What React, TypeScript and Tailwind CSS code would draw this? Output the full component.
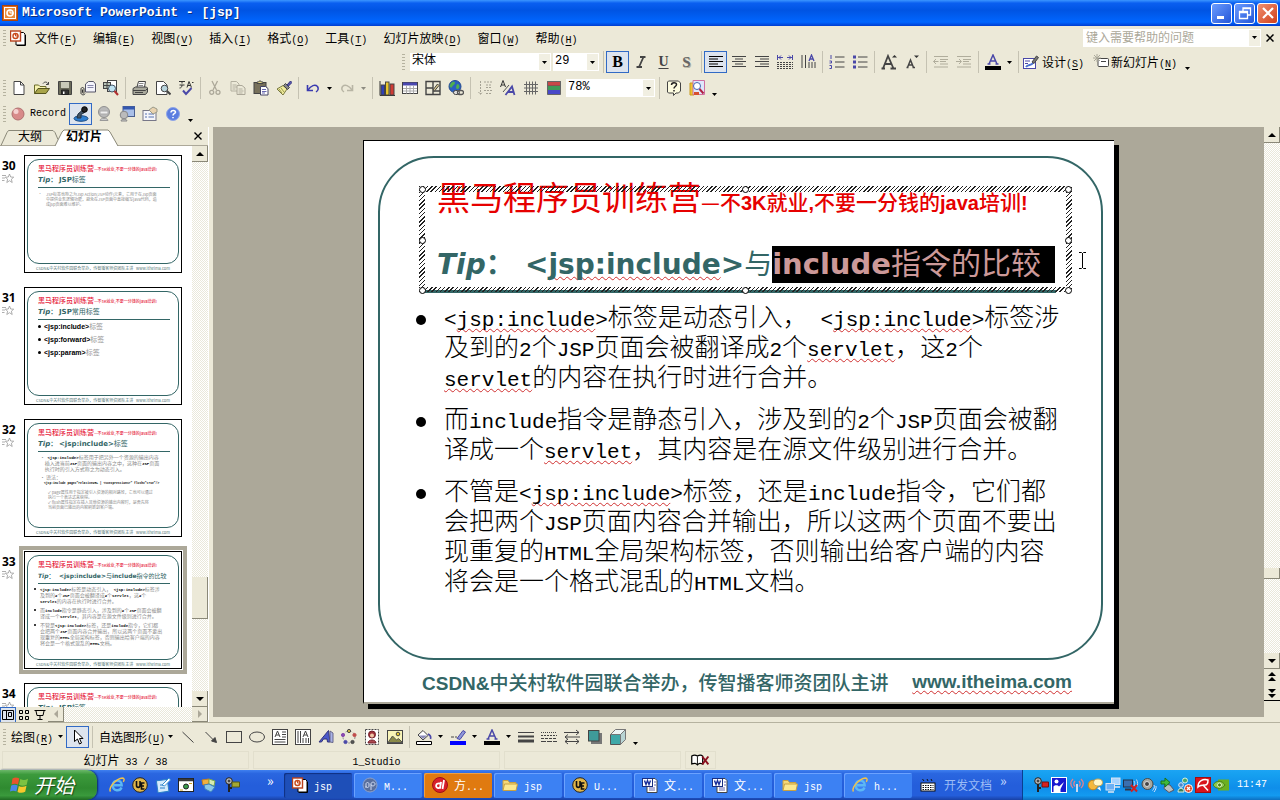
import React from "react";

type Kids = { children?: React.ReactNode };

/* ---------- text helpers ---------- */

function Mixed({ text, latin }: { text: string; latin: string }) {
  return (
    <span>
      {text.split(/([\x20-\x7e]+)/).map((run, i) =>
        i % 2 === 1 ? (
          <span key={i} className={latin}>
            {run}
          </span>
        ) : (
          run
        )
      )}
    </span>
  );
}

const UI_LATIN = "font-['Liberation_Mono',monospace] text-[10px] leading-none";

function Ui({ text }: { text: string }) {
  return <Mixed text={text} latin={UI_LATIN} />;
}

function Accel({ label, k }: { label: string; k: string }) {
  return (
    <span className="whitespace-nowrap">
      {label}
      <span className={UI_LATIN}>
        (<span className="underline underline-offset-2">{k}</span>)
      </span>
    </span>
  );
}

/* ---------- icons ---------- */

function Ico({ children, c = "size-4" }: Kids & { c?: string }) {
  return (
    <svg viewBox="0 0 16 16" className={`${c} shrink-0`} fill="none" stroke="#444" aria-hidden="true">
      {children}
    </svg>
  );
}

const Caret = () => (
  <svg viewBox="0 0 5 3" className="h-[3px] w-[5px] shrink-0" aria-hidden="true">
    <path d="M0 0h5L2.5 3z" fill="#000" />
  </svg>
);

const icons = {
  ppt: (
    <Ico>
      <rect x="0.5" y="0.5" width="15" height="15" fill="#d9661c" stroke="#a8440c" />
      <rect x="2.5" y="2.5" width="11" height="11" fill="#e98b3a" stroke="#fff" />
      <circle cx="8" cy="8" r="3" stroke="#fff" strokeWidth="1.6" />
      <path d="M8 8V4.500M8 8h4" stroke="#fff" />
    </Ico>
  ),
  pptDoc: (
    <Ico>
      <path d="M6 2.500h7.500L15 4v11H6z" fill="#fff" stroke="#000" />
      <path d="M15.500 5v10.500H7" stroke="#000" />
      <rect x="0.500" y="1" width="10" height="10" fill="#fff" stroke="#b8401c" strokeWidth="1.400" />
      <circle cx="5.500" cy="6" r="2.500" stroke="#c84a1c" strokeWidth="1.400" />
      <path d="M5.500 6V3.500M5.500 6h3" stroke="#c84a1c" />
    </Ico>
  ),
  newDoc: (
    <Ico>
      <path d="M3 1.500h6.500L13 5v9.500H3z" fill="#fff" />
      <path d="M9.500 1.500V5H13" />
    </Ico>
  ),
  open: (
    <Ico>
      <path d="M.5 13.500V5h4l1.500 1.500h6V9" fill="#f7f3b0" stroke="#6b6b2a" />
      <path d="M.5 13.500L4 8.500h11.500l-3.500 5z" fill="#a8a44a" stroke="#555520" />
      <path d="M9 3.500c1.500-2 4-2 5 .5M14.500 2v2.500H12" />
    </Ico>
  ),
  save: (
    <Ico>
      <path d="M1.500 1.500h13v13h-13z" fill="#6b6b5a" />
      <path d="M4 2h8v6H4z" fill="#c9c9b8" stroke="none" />
      <path d="M4.500 10h7v4.500h-7z" fill="#333" stroke="#222" />
      <path d="M6 11.500h1.500v2.500H6z" fill="#fff" stroke="none" />
    </Ico>
  ),
  mail: (
    <Ico>
      <path d="M5.500 4l3-2.500h5l2 2.500v8h-10z" fill="#f4f4fb" stroke="#556" />
      <path d="M7.500 5.500h6M7.500 7.500h6" stroke="#88a" />
      <path d="M1 13.500V9c0-2 3-2 3 0v3.500c0 1-1.500 1-1.500 0V9.500M1 13.500c1 2 4 1.500 4 0" stroke="#333" />
    </Ico>
  ),
  searchDoc: (
    <Ico>
      <rect x="4.500" y="0.500" width="9" height="11" fill="#fff" />
      <rect x="0.500" y="2.500" width="7" height="6" fill="#b8c4b8" />
      <path d="M1 5.500h6M4 3v5" />
      <circle cx="9" cy="8.500" r="3.500" fill="#bfe3f2" stroke="#456" />
      <path d="M11.500 11l3.500 4" stroke="#b03030" strokeWidth="2" />
    </Ico>
  ),
  print: (
    <Ico>
      <path d="M5 7l1.500-5.500h7L12.500 7" fill="#fff" />
      <path d="M7 3.500h4.500M6.500 5.500H11" stroke="#888" />
      <path d="M1 8.500L3.500 7h11L15.500 8v4l-2 2.500H1z" fill="#a9a99c" />
      <path d="M1 10.500h12.500l2-2M3 12.500h8" />
    </Ico>
  ),
  preview: (
    <Ico>
      <path d="M1.500 1.500h7L12 5v9.500H1.500z" fill="#fff" />
      <circle cx="9.500" cy="8.500" r="3.300" fill="#b9d4dc" />
      <path d="M12 11l3.500 3.500" strokeWidth="2" />
    </Ico>
  ),
  spell: (
    <Ico>
      <path d="M1 1.500h6M4 1.500v2M1.500 5h5M4 5c0 2-1 3-2.500 3M9 7.500l2-6 2.500 6M9.700 5.500h3M14 2.500h1.500" stroke="#333" />
      <path d="M5 10.500l3 3.500 5.500-6" stroke="#4a48a8" strokeWidth="2" />
    </Ico>
  ),
  cut: (
    <Ico>
      <path d="M5 1l4.500 9M10.500 1L6 10" stroke="#aca899" strokeWidth="1.300" />
      <circle cx="4.700" cy="12.300" r="2" stroke="#aca899" strokeWidth="1.300" />
      <circle cx="11" cy="12.300" r="2" stroke="#aca899" strokeWidth="1.300" />
    </Ico>
  ),
  copy: (
    <Ico>
      <path d="M1 1.500h5.500L9 4v7H1zM2.500 5h4M2.500 7h5M2.500 9h3" stroke="#b3b0a0" />
      <path d="M7 5.500h5L15 8v6.500H7z" fill="#ece9d8" stroke="#aca899" />
      <path d="M8.500 9h4M8.500 11h5M8.500 13h4" stroke="#b3b0a0" />
    </Ico>
  ),
  paste: (
    <Ico>
      <rect x="1" y="2.500" width="12" height="11" fill="#77705a" stroke="#444" />
      <path d="M4 3.500V2h1.500C6 .5 8 .5 8.500 2H10v1.500z" fill="#e6d98a" />
      <path d="M7.500 6.500h5l2.500 2v6.500H7.500z" fill="#fff" stroke="#446" />
      <path d="M9 9.500h4M9 11.500h4.500M9 13h3" stroke="#6a6ab0" />
    </Ico>
  ),
  brush: (
    <Ico>
      <path d="M1 9l6-3.500 4 3.500-4 6z" fill="#f1ec9c" stroke="#777740" />
      <path d="M3 9l3 4M5 8l3 4" stroke="#9a9a50" />
      <path d="M7.500 5.500l4 4 2-2-4-4z" fill="#888" />
      <path d="M11 5l3.500-4L16 2.500 12.500 6z" fill="#5a58b0" stroke="#33337a" />
    </Ico>
  ),
  undo: (
    <Ico>
      <path d="M2.500 5v5.500H8" stroke="#3a3ab0" strokeWidth="1.600" />
      <path d="M3 10C6 5.500 10 4 12.500 6.500c1.500 2.500 0 4.500-1.500 5.500" stroke="#3a3ab0" strokeWidth="1.500" />
    </Ico>
  ),
  redo: (
    <Ico>
      <path d="M13.500 5v5.500H8" stroke="#b8b5a5" strokeWidth="1.600" />
      <path d="M13 10C10 5.500 6 4 3.500 6.500c-1.500 2.500 0 4.500 1.500 5.500" stroke="#b8b5a5" strokeWidth="1.500" />
    </Ico>
  ),
  chart: (
    <Ico>
      <path d="M1 1v14.500h15" stroke="#333" />
      <rect x="2" y="5" width="3.500" height="10" fill="#2f3fb8" />
      <rect x="6.500" y="2" width="3.500" height="13" fill="#e8c52c" />
      <rect x="11" y="4" width="4" height="11" fill="#cf3b34" />
    </Ico>
  ),
  table: (
    <Ico>
      <rect x="0.500" y="2.500" width="15" height="11" fill="#fff" />
      <path d="M1 4h14" stroke="#4a48b0" strokeWidth="3" />
      <path d="M1 8.500h14M1 11h14M4.500 5.500v8M8 5.500v8M11.500 5.500v8" stroke="#aaa" />
    </Ico>
  ),
  borders: (
    <Ico>
      <path d="M1 1.500h14v13H1zM1 8h7M8 1.500v13M8 11h7" strokeWidth="1.400" />
      <path d="M8 10l4.500-6 1.500 1.500L9.500 11z" fill="#d8c890" />
    </Ico>
  ),
  link: (
    <Ico>
      <circle cx="7" cy="6.500" r="6" fill="#2a5fc0" stroke="#234a90" />
      <path d="M3 3c2-2 4-1.500 4 0s-2 2-3 4S1.500 6 1.500 6zM9 4c2 0 3 2 2 4S8 9 8 7z" fill="#4fae50" stroke="none" />
      <rect x="5.500" y="10.500" width="6" height="4" rx="2" fill="#ddd" />
      <rect x="9.500" y="10.500" width="6" height="4" rx="2" fill="none" stroke="#555" strokeWidth="1.300" />
    </Ico>
  ),
  expand: (
    <Ico>
      <path d="M3.500 1v13M1.500 12l2 2.500 2-2.500M7 2h9M9 5h6M9 7.500h5M7 10.500h9M9 13.500h6" stroke="#a5a294" strokeDasharray="2 1" />
    </Ico>
  ),
  fmt: (
    <Ico>
      <path d="M0.500 7L3 .5 5.500 7M1.300 5h3.400" stroke="#333" />
      <path d="M3 12L9 5" stroke="#555" />
      <path d="M5.500 15L12 6.500 14.500 15M8 12h6" stroke="#4a48a8" strokeWidth="1.800" />
    </Ico>
  ),
  grid: (
    <Ico>
      <path d="M1 4.500h14M1 8h14M1 11.500h14M3.500 1.500v13M6.500 1.500v13M9.500 1.500v13M12.500 1.500v13" stroke="#666" />
    </Ico>
  ),
  colors: (
    <Ico>
      <path d="M1.500 1.500h13v4.500h-13z" fill="#c84848" stroke="#555" />
      <path d="M1.500 6h13v4h-13z" fill="#3f9a58" stroke="none" />
      <path d="M1.500 10h13v4.500h-13z" fill="#4848c8" stroke="none" />
      <path d="M1.500 1.500h13v13h-13z" stroke="#666" />
    </Ico>
  ),
  help: (
    <Ico>
      <path d="M2.500 1h10l2 2v8l-2 2H10l-2.500 2.500V13h-5L1.500 12V2z" fill="#fdfce0" />
      <path d="M5.500 5c0-3 5-3 5-.5C10.500 6.500 8 6.500 8 8.500M8 10v1.500" stroke="#222" strokeWidth="1.500" />
    </Ico>
  ),
  research: (
    <Ico>
      <path d="M1 3h4v12H1z" fill="#f0c530" stroke="#c89a20" />
      <path d="M4 .5h11.500v14H4z" fill="#dfe7fb" stroke="#d070a0" />
      <circle cx="8" cy="6" r="3.500" fill="#fff" stroke="#4466b0" />
      <path d="M10.500 9l4 4.500" stroke="#b02040" strokeWidth="2" />
      <path d="M5 12h5v3H5z" fill="#d85030" stroke="none" />
    </Ico>
  ),
  italic: (
    <Ico>
      <path d="M7 3h5.500M3.500 13H9M10.500 3L6 13" strokeWidth="1.800" />
    </Ico>
  ),
  left: (
    <Ico>
      <path d="M1 2.500h14M1 5h9M1 7.500h14M1 10h9M1 12.500h14" stroke="#000" />
    </Ico>
  ),
  center: (
    <Ico>
      <path d="M1 2.500h14M4 5h8M1 7.500h14M4 10h8M1 12.500h14" />
    </Ico>
  ),
  right: (
    <Ico>
      <path d="M1 2.500h14M6 5h9M1 7.500h14M6 10h9M1 12.500h14" />
    </Ico>
  ),
  distribute: (
    <Ico>
      <path d="M.5 1v5M15.500 1v5M1 3.500h5M10 3.500h5M4 1.500l-2 2 2 2M12 1.500l2 2-2 2" stroke="#4a48a8" />
      <path d="M0 8.500h16M0 10.500h16M0 12.500h16M0 14.500h16" strokeDasharray="2 1" />
    </Ico>
  ),
  vertical: (
    <Ico>
      <path d="M2 1v13M5.500 1v13M9 8v6M12 8v6M15 8v6" />
      <path d="M9 7l2.500-6L14 7M10 5h3.500" stroke="#4a48a8" strokeWidth="1.300" />
    </Ico>
  ),
  numbered: (
    <Ico>
      <path d="M6 3h9.500M6 8h9.500M6 13h9.500" />
      <path d="M2 1v4M.5 7h2v2h-2M.5 11.500h2v3h-2" stroke="#4a48a8" />
    </Ico>
  ),
  bullets: (
    <Ico>
      <path d="M6 3h9.500M6 8h9.500M6 13h9.500" />
      <path d="M1 1.500h3v3H1zM1 6.500h3v3H1zM1 11.500h3v3H1z" fill="#4a48a8" stroke="none" />
    </Ico>
  ),
  grow: (
    <Ico>
      <path d="M2 14.500L7 2l5.500 12.500M4 10h6.500M.5 14.500H4M9.500 14.500H15" stroke="#444" strokeWidth="1.800" />
      <path d="M11 3.500h5L13.500 1z" fill="#333" stroke="none" />
    </Ico>
  ),
  shrink: (
    <Ico>
      <path d="M3.500 13.500L6.500 6l3 7.500M4.500 11h4M2.500 13.500h2M8.500 13.500h2.500" strokeWidth="1.500" />
      <path d="M10 1.500h5L12.500 4z" fill="#333" stroke="none" />
    </Ico>
  ),
  outdent: (
    <Ico>
      <path d="M1 2.500h14M7 5.500h8M7 7.500h6M7 10h8M1 13h14M5.500 7.500h-5M3 5L.5 7.500 3 10" stroke="#b0ad9c" />
    </Ico>
  ),
  indent: (
    <Ico>
      <path d="M1 2.500h14M7 5.500h8M7 7.500h6M7 10h8M1 13h14M0 7.500h5M3 5l2.500 2.500L3 10" stroke="#b0ad9c" />
    </Ico>
  ),
  fontColor: (
    <Ico>
      <path d="M4 10L8 1l4 9M5.300 7h5M2.500 10h3M10.500 10h3" stroke="#4a48a8" strokeWidth="1.500" />
      <path d="M0 12h16v4H0z" fill="#000" stroke="none" />
    </Ico>
  ),
  design: (
    <Ico>
      <rect x="0.500" y="4.500" width="12" height="10" fill="#fff" stroke="#4a48a8" />
      <path d="M2 7h5M2 9.500h3" stroke="#4a48a8" />
      <path d="M3 13c2-3 5-1 7-4" stroke="#4a6fd0" strokeWidth="2" />
      <path d="M9 8l4.500-6 2 1.500-4.500 6z" fill="#777" />
    </Ico>
  ),
  newSlide: (
    <Ico>
      <rect x="5" y="4.500" width="10.500" height="8" rx="1" fill="#fff" />
      <path d="M8 7.500h5" />
      <path d="M4 0v8M0 4h8M1 1l6 6M7 1L1 7" stroke="#aaa89a" />
    </Ico>
  ),
  record: (
    <Ico>
      <circle cx="8" cy="8" r="6" fill="#d88a8a" stroke="#b07070" />
      <circle cx="6" cy="5.500" r="2.500" fill="#f5d0d0" stroke="none" />
    </Ico>
  ),
  pointer3d: (
    <Ico>
      <ellipse cx="8" cy="12.500" rx="7" ry="2.800" fill="#2f7fd0" stroke="#1a4a80" />
      <path d="M4 12l1-4 4-3.500 2.500 2-3.500 2V12z" fill="#456" stroke="#234" />
      <circle cx="11.500" cy="3.500" r="2.800" fill="#222" stroke="#000" />
    </Ico>
  ),
  webcam: (
    <Ico>
      <circle cx="8" cy="6" r="5.500" fill="#b9b9b9" stroke="#8f8f8f" />
      <path d="M4 5h8v3H4z" fill="#eee" stroke="#aaa" />
      <path d="M4 14.500c0-3 8-3 8 0z" fill="#ccc" stroke="#999" />
    </Ico>
  ),
  camWin: (
    <Ico>
      <rect x="4" y="0.500" width="11.500" height="10" fill="#a9bfe8" stroke="#4a5f90" />
      <path d="M4 2h11.500" stroke="#3458b0" strokeWidth="3" />
      <circle cx="5" cy="9" r="3.800" fill="#bbb" stroke="#888" />
      <path d="M2 15c0-2.500 6-2.500 6 0z" fill="#ccc" stroke="#888" />
    </Ico>
  ),
  props: (
    <Ico>
      <rect x="1" y="4.500" width="13" height="10" fill="#f5f5fa" stroke="#778" />
      <path d="M3 8h2M3 11h2M6.500 8H12M6.500 11H12" stroke="#5570b0" />
      <path d="M7 4l4-3 4 2v3l-4 2z" fill="#e9d3b0" stroke="#998" />
    </Ico>
  ),
  helpBlue: (
    <Ico>
      <circle cx="8" cy="8" r="6.500" fill="#5b7de0" stroke="#8fa5e8" />
      <path d="M6 6.500c0-3 4.500-2.500 4.500-.3C10.500 7.500 8 7.500 8 9.500M8 11v1.300" stroke="#fff" strokeWidth="1.500" />
    </Ico>
  ),
  cursor: (
    <Ico>
      <path d="M4.500 1v11.500l3-2.500 2 5 2-1-2-4.500h3.500z" fill="#fff" stroke="#000" />
    </Ico>
  ),
  line: (
    <Ico>
      <path d="M2.500 3l11 10.500" />
    </Ico>
  ),
  arrow: (
    <Ico>
      <path d="M2.500 3l8 8" />
      <path d="M13.500 13.500L8.500 12l3.500-3.500z" fill="#444" />
    </Ico>
  ),
  rect: (
    <Ico>
      <rect x="0.500" y="2.500" width="15" height="11" />
    </Ico>
  ),
  oval: (
    <Ico>
      <ellipse cx="8" cy="8" rx="7.500" ry="5" />
    </Ico>
  ),
  textbox: (
    <Ico>
      <rect x="0.500" y="0.500" width="15" height="15" fill="#fff" />
      <path d="M3 8l2.500-6L8 8M4 6h3M10 3h4M10 5.500h4M10 8h4M2.500 10.500h11M2.500 13h11" />
    </Ico>
  ),
  vtextbox: (
    <Ico>
      <rect x="0.500" y="0.500" width="15" height="15" fill="#fff" />
      <path d="M3 2v12M5.500 2v12M8 9v5M11 9v5M13.500 9v5M8 8l2.500-6L13 8M9 6h3" />
    </Ico>
  ),
  wordart: (
    <Ico>
      <path d="M1 13L10.500 1.500 12 13H9.500L9 10H5.500L3.500 13z" fill="#4a58c8" stroke="#33337a" />
      <path d="M12 2l3 2v9.500l-3-.5z" fill="#a9b2e8" stroke="#668" />
    </Ico>
  ),
  diagram: (
    <Ico>
      <circle cx="8" cy="8" r="6" stroke="#888" strokeDasharray="2 2" />
      <circle cx="8" cy="2" r="1.600" fill="#d8c040" />
      <circle cx="13.500" cy="6" r="1.600" fill="#c04a4a" stroke="#c04a4a" />
      <circle cx="11.500" cy="13" r="1.600" fill="#555" />
      <circle cx="4.500" cy="13" r="1.600" fill="#4a48a8" stroke="#4a48a8" />
      <circle cx="2" cy="6" r="1.600" fill="#8a4ab0" stroke="#8a4ab0" />
    </Ico>
  ),
  clipart: (
    <Ico>
      <rect x="1.500" y="0.500" width="13" height="15" fill="#fff" strokeDasharray="2 1" />
      <circle cx="8" cy="5.500" r="3.500" fill="#a03038" stroke="#702028" />
      <circle cx="8" cy="6.500" r="2" fill="#f0c8a8" stroke="none" />
      <path d="M4 14c0-4 8-4 8 0z" fill="#b04a50" stroke="#702028" />
    </Ico>
  ),
  picture: (
    <Ico>
      <rect x="0.500" y="1.500" width="15" height="13" fill="#f8f4b8" />
      <circle cx="11" cy="5" r="1.800" fill="#e8c830" />
      <path d="M1 13.500L5.500 7l4 4 2-1.500 4 4z" fill="#8a8a48" stroke="#555" />
    </Ico>
  ),
  fill: (
    <Ico>
      <path d="M2 6l5-4.500 5 5L7 11z" fill="#fff" />
      <path d="M3 6.500h8L7 10z" fill="#8a8ab8" stroke="none" />
      <path d="M12 5c2.500 1 3 3 2.500 5" stroke="#4a48a8" strokeWidth="1.600" />
      <path d="M.5 12.500h15v3H.5z" fill="#fff" stroke="#000" />
    </Ico>
  ),
  lineColor: (
    <Ico>
      <path d="M1 8h3M5 8h2" />
      <path d="M7 9.500l6-8 2.500 1.500-5.500 7.500z" fill="#8f98d8" stroke="#4a48a8" />
      <path d="M0 12h16v4H0z" fill="#00f" stroke="none" />
    </Ico>
  ),
  lineStyle: (
    <Ico>
      <path d="M0 3.500h16" />
      <path d="M0 7.500h16" strokeWidth="2" />
      <path d="M0 12h16" strokeWidth="3" />
    </Ico>
  ),
  dashStyle: (
    <Ico>
      <path d="M0 3.500h16" strokeDasharray="1 1" />
      <path d="M0 6.500h16" strokeDasharray="2 1" />
      <path d="M0 9.500h16" strokeDasharray="3 1" />
      <path d="M0 12.500h16" strokeDasharray="5 1" />
    </Ico>
  ),
  arrowStyle: (
    <Ico>
      <path d="M0 3.500h15M12 1l3 2.500L12 6M1 8h15M4 5.500L1 8l3 2.500M1 12.500h14M4 10l-3 2.500L4 15M12 10l3 2.500-3 2.500" />
    </Ico>
  ),
  shadow: (
    <Ico>
      <path d="M4 4h11v11H4z" fill="#777" stroke="none" />
      <rect x="1.500" y="1.500" width="10.500" height="10.500" fill="#3f9a9a" />
    </Ico>
  ),
  cube: (
    <Ico>
      <path d="M.5 5.500h10v10H.5z" fill="#3fa8a8" stroke="#555" />
      <path d="M.5 5.500l5-5h10l-5 5z" fill="#eef6f6" stroke="#777" />
      <path d="M10.500 5.500l5-5v10l-5 5z" fill="#b8d4d4" stroke="#777" />
    </Ico>
  ),
  book: (
    <Ico c="h-[14px] w-[21px]">
      <path d="M-2 3.500c3-2 5-1 6.500 0 1.500-1 4-2 6 0v9c-2-1-4.500-1-6 1-1.500-2-4-2-6.500-1z" fill="#fff" stroke="#000" strokeWidth="1.400" />
      <path d="M4.500 4v9" stroke="#000" />
      <path d="M10 4l7 9M17 4l-7 9" stroke="#8b1020" strokeWidth="2.200" />
    </Ico>
  ),
  ie: (
    <Ico>
      <path d="M12.500 10.500c-1.500 4-8.500 4-8.800-2 0-6.500 9-6.500 9-.3H5" stroke="#5cb8f5" strokeWidth="2.400" />
      <path d="M1.500 14.500C-1 11 7 1.500 13.500 1c2 0 2 2 .8 3.800" stroke="#f2c24a" strokeWidth="1.400" />
    </Ico>
  ),
  ue: (
    <Ico>
      <circle cx="8" cy="8" r="7.300" fill="#e0b64a" stroke="#222" />
      <path d="M4.500 4v4.500c0 2.500 3.500 2.500 3.500 0V4M12.500 6H9.500v6h3M9.500 9h2.500" stroke="#111" strokeWidth="1.600" />
    </Ico>
  ),
  outlook: (
    <Ico>
      <rect x="2" y="3" width="11" height="12" fill="#d4ebfb" stroke="#2b7fc8" transform="rotate(-8 8 8)" />
      <path d="M5 8h5M5 11h5" stroke="#2b7fc8" />
      <path d="M7 8l7-7 1.500 2-6 6z" fill="#fff" stroke="#3a8fd0" />
    </Ico>
  ),
  desk: (
    <Ico>
      <rect x="0.500" y="1.500" width="15" height="13" fill="#fff" stroke="#222" />
      <path d="M1 3h14" stroke="#3a3a3a" strokeWidth="2.500" />
      <circle cx="8" cy="9.500" r="2.500" fill="#3a9a4a" stroke="#222" />
      <path d="M2 13h3M11 6.500h3" stroke="#c8a020" />
    </Ico>
  ),
  butterfly: (
    <Ico>
      <path d="M1 3l7-1v5l-6 1z" fill="#f0b040" stroke="#c88020" />
      <path d="M8 2l6 2-1 5-5-2z" fill="#d8ecb0" stroke="#7aa850" />
      <path d="M3 8l5-1 6 3-4 5-6-3z" fill="#8ac8e8" stroke="#3a80c0" />
    </Ico>
  ),
  keyman: (
    <Ico>
      <circle cx="5" cy="4" r="3.300" fill="#bbb" stroke="#222" />
      <circle cx="5" cy="4" r="1" fill="#222" />
      <path d="M5 7v8M5 11h3" stroke="#222" strokeWidth="2" />
      <path d="M8 5h7.500v5H8z" fill="#a5a832" stroke="#55581a" />
    </Ico>
  ),
  keyred: (
    <Ico>
      <circle cx="5" cy="4" r="3.300" fill="#bbb" stroke="#222" />
      <circle cx="5" cy="4" r="1" fill="#222" />
      <path d="M5 7v8M5 11h3" stroke="#222" strokeWidth="2" />
      <path d="M9 5h6.500v5H9z" fill="#d82020" stroke="#701010" />
    </Ico>
  ),
  mp: (
    <Ico>
      <circle cx="8" cy="8" r="7" fill="#5a6f9c" stroke="#8ba0cc" />
      <path d="M4 11V7c0-2 3-2 3 0v2c0 2-3 2-3 0M9 13V7c0-2.500 4-2.500 4 0s-4 2.500-4 .5" stroke="#d0dcf4" />
    </Ico>
  ),
  red: (
    <Ico>
      <circle cx="8" cy="8" r="7.500" fill="#d8202a" stroke="#a01018" />
      <path d="M8 6.500c-5-1-5 5-1 4.500 1.500 0 2-6 2-6L8 11.500M12 3l-1.500 9" stroke="#fff" strokeWidth="1.800" />
    </Ico>
  ),
  folder: (
    <Ico>
      <path d="M1 13V3.500h5l1.500 2H14V8" fill="#f4d878" stroke="#c8a040" />
      <path d="M1 13.500L2.500 7h13L14 13.500z" fill="#fbe88f" stroke="#c8a040" />
    </Ico>
  ),
  word: (
    <Ico>
      <path d="M5 1.500h8l2 2v12H5z" fill="#fff" stroke="#444" />
      <path d="M7 11h6M7 13h6M12 5h2M12 8h2" stroke="#66a" />
      <rect x="0.500" y="1.500" width="10" height="8" fill="#fff" stroke="#1a2f80" />
      <path d="M2.500 3.500l1.500 4 1.500-4 1.500 4 1.500-4" stroke="#1a2f9a" strokeWidth="1.400" />
    </Ico>
  ),
  keyboard: (
    <Ico>
      <path d="M4 4l-1.500-2M8 4L7 2M12 4l-1-2" stroke="#111" />
      <rect x="1" y="6" width="14" height="8" fill="#fff" stroke="#111" />
      <path d="M2.500 8.500h11M2.500 10.500h11M2.500 12.500h11" stroke="#111" strokeDasharray="1.500 1" />
    </Ico>
  ),
  trayMan: (
    <Ico>
      <rect x="0.500" y="0.500" width="15" height="15" fill="#1818d0" stroke="#fff" />
      <circle cx="5.500" cy="4.500" r="2" fill="#fff" stroke="none" />
      <path d="M2.500 15V9.500C4 7.500 7 8 8 9.500l5-4.500-3.500 7V15z" fill="#fff" stroke="none" />
    </Ico>
  ),
  antenna: (
    <Ico>
      <path d="M4 2c-3 3-3 6 0 9M6 4C4.500 6 4.500 8 6 9.500M12 2c3 3 3 6 0 9M10 4c1.500 2 1.500 4 0 5.500" stroke="#e08090" strokeWidth="1.300" />
      <path d="M8 7v8" stroke="#c8d8f0" strokeWidth="2" />
    </Ico>
  ),
  chat: (
    <Ico>
      <circle cx="6" cy="8" r="4.800" fill="#f5b83a" stroke="#c88418" />
      <ellipse cx="11" cy="5.500" rx="4.500" ry="3.500" fill="#fff7c8" stroke="#c8a858" />
      <path d="M10 11l4 3-1-4z" fill="#fff" stroke="none" />
    </Ico>
  ),
  net: (
    <Ico>
      <rect x="6.500" y="1" width="8.500" height="6.500" fill="#a8d4ff" stroke="#d8e4f4" />
      <rect x="1" y="6.500" width="8.500" height="6.500" fill="#6cb0f5" stroke="#d8e4f4" />
      <path d="M3 15h6M10 10h5" stroke="#e0e8f4" strokeWidth="1.600" />
    </Ico>
  ),
  wifiOff: (
    <Ico>
      <rect x="0.500" y="3" width="9" height="7" fill="#3a6fb0" stroke="#23324a" />
      <path d="M2 12.500h6" stroke="#334" strokeWidth="2" />
      <path d="M11 4c1 2 1 3 0 5M13.500 2.500c1.500 3 1.500 5 0 7.500" stroke="#c8d4e8" />
      <path d="M8 8l6 6.500M14 8l-6 6.500" stroke="#d02020" strokeWidth="2" />
    </Ico>
  ),
  speaker: (
    <Ico>
      <circle cx="6.500" cy="7" r="5.500" fill="#a8a8a0" stroke="#4a4a48" />
      <circle cx="6" cy="7" r="2.500" fill="#444" stroke="#ddd" />
      <path d="M13 8c1 2 0 4-1.500 5.500M15 9c.5 2-.5 4-2 6" stroke="#d0e4ff" />
    </Ico>
  ),
  usb: (
    <Ico>
      <path d="M6 7l5 1 4 5-5 2.500-5-4z" fill="#b8c0c0" stroke="#556" />
      <path d="M2 7V4h4V1l5 4.500L6 10V7z" fill="#3fb83a" stroke="#1a701a" />
    </Ico>
  ),
  users: (
    <Ico>
      <circle cx="8" cy="3.500" r="2.500" fill="#48a868" stroke="#d8f0e0" />
      <circle cx="4" cy="8" r="2.300" fill="#4a88c8" stroke="#d8e8f8" />
      <path d="M1 15c0-5 6-5 6 0z" fill="#3a7f5a" stroke="#d8f0e0" />
      <circle cx="11.500" cy="11.500" r="4" fill="#e04a28" stroke="#fff" />
      <path d="M10 10l3 3M13 10l-3 3" stroke="#fff" strokeWidth="1.300" />
    </Ico>
  ),
  umbrella: (
    <Ico>
      <rect x="0.500" y="0.500" width="15" height="15" fill="#d8141c" stroke="#a00c10" />
      <path d="M3 10C3 4 8 1.500 13 3c0 4-1 5-3 5s-5 0-7 2z" fill="none" stroke="#fff" strokeWidth="1.500" />
      <path d="M8 8l5 5.500" stroke="#fff" strokeWidth="1.500" />
    </Ico>
  ),
  nvidia: (
    <Ico>
      <rect x="5" y="2.500" width="11" height="11" fill="#6cb020" stroke="none" />
      <path d="M0 8c3-5 9-5 12 0-3 4.500-9 4.500-12 0z" fill="#8cc850" stroke="#4a8010" />
      <circle cx="6.500" cy="8" r="2" fill="#4a8010" stroke="#dff0c0" />
    </Ico>
  ),
};

type IconName = keyof typeof icons;

/* ---------- toolbar pieces ---------- */

function Btn({ icon, on, children }: Kids & { icon?: IconName; on?: boolean }) {
  return (
    <button
      type="button"
      className={
        on
          ? "flex h-[22px] w-[23px] shrink-0 items-center justify-center border border-[#316ac5] bg-[#dde4ee]"
          : "flex h-[22px] w-[23px] shrink-0 items-center justify-center"
      }
    >
      {icon ? icons[icon] : children}
    </button>
  );
}

const Drop = () => (
  <button type="button" className="flex h-[22px] w-[11px] shrink-0 items-center justify-center">
    <Caret />
  </button>
);

const Sep = () => <span className="ml-[3px] mr-[2px] h-[22px] w-px shrink-0 bg-[#c5c2b2]" />;

const Grip = () => (
  <span className="ml-[3px] mr-1 h-4 w-[3px] shrink-0 bg-[repeating-linear-gradient(#b5b29f_0_1px,#ece9d8_1px_3px)]" />
);

const More = () => (
  <button type="button" className="flex h-[22px] w-3 shrink-0 items-end justify-center pb-[3px]">
    <Caret />
  </button>
);

function Combo({ value, w, label }: { value: string; w: string; label: string }) {
  return (
    <label className={`relative mx-px flex h-[18px] shrink-0 items-center bg-white ${w}`}>
      <select
        aria-label={label}
        defaultValue={value}
        className="size-full appearance-none bg-white pl-[2px] pb-[2px] font-['Liberation_Mono','Noto_Sans_CJK_SC',monospace] text-[12px] leading-4 outline-none"
      >
        <option>{value}</option>
      </select>
      <span className="pointer-events-none absolute right-px flex h-4 w-[11px] items-center justify-center bg-[#f1efe2]">
        <Caret />
      </span>
    </label>
  );
}

/* ---------- slide pieces ---------- */

const Spell = ({ children }: Kids) => (
  <span className="underline decoration-[#d03030] decoration-wavy decoration-1 underline-offset-2 [text-decoration-skip-ink:none]">
    {children}
  </span>
);

const MONO = "font-['Liberation_Mono',monospace] text-[21px] leading-4";

const bodyParagraphs: string[][] = [
  ["<[jsp:include]>标签是动态引入， <[jsp:include]>标签涉", "及到的2个JSP页面会被翻译成2个[servlet]，这2个", "[servlet]的内容在执行时进行合并。"],
  ["而include指令是静态引入，涉及到的2个JSP页面会被翻", "译成一个[servlet]，其内容是在源文件级别进行合并。"],
  [
    "不管是<[jsp:include]>标签，还是include指令，它们都",
    "会把两个JSP页面内容合并输出，所以这两个页面不要出",
    "现重复的HTML全局架构标签，否则输出给客户端的内容",
    "将会是一个格式混乱的HTML文档。",
  ],
];

function BodyLine({ line }: { line: string }) {
  return (
    <span className="block whitespace-pre">
      {line.split(/\[([^\]]+)\]/).map((part, i) =>
        i % 2 === 1 ? (
          <span key={i} className={MONO}>
            <Spell>{part}</Spell>
          </span>
        ) : (
          <Mixed key={i} text={part} latin={MONO} />
        )
      )}
    </span>
  );
}

const Handle = ({ at }: { at: string }) => (
  <span className={`absolute size-[7px] rounded-full border border-black bg-white ${at}`} />
);

const HATCH = "absolute bg-[repeating-linear-gradient(135deg,#222_0_1px,transparent_1px_3px)]";

function Slide() {
  return (
    <article className="relative h-fit w-[751px] max-w-full shrink-0 border-b-2 border-l border-t border-b-[#aca899] border-l-black border-t-black bg-white pb-[6px] pl-[14px] pr-[11px] pt-[15px] shadow-[5px_5px_0_0_#000]">
      <div className="rounded-[56px] border-2 border-[#336666] pb-16 pt-5">
        <header className="relative ml-[39px] mr-[29px] pb-[11px] pl-[18px]">
          <p className="whitespace-nowrap text-[33px] leading-9 text-[#e60000]">
            黑马程序员训练营
            <span className="text-[21px] font-medium leading-none">
              <Mixed text="—不3K就业,不要一分钱的java培训!" latin="font-['Liberation_Sans',sans-serif] font-bold text-[20px] leading-none" />
            </span>
          </p>
          <h1 className="mt-8 flex whitespace-nowrap font-['DejaVu_Sans','Noto_Sans_CJK_SC',sans-serif] text-[28px] font-bold leading-[37px] text-[#336666]">
            <span className="w-[88px]">
              <i>Tip</i>：
            </span>
            <span>
              &lt;<Spell>jsp:include</Spell>&gt;
            </span>
            <span className="font-normal">与</span>
            <span className="bg-black pr-[14px] text-[29px] text-[#cc9999]">
              include<span className="text-[30px] font-normal leading-none">指令的比较</span>
            </span>
          </h1>
          <div className="absolute inset-x-0 bottom-0 top-2">
            <span className="absolute bottom-px left-[3px] right-4 h-[3px] bg-[#336666]" />
            <span className={`${HATCH} inset-x-0 top-0 h-[6px]`} />
            <span className={`${HATCH} inset-x-0 bottom-[2px] h-[5px]`} />
            <span className={`${HATCH} inset-y-[6px] left-0 w-[6px]`} />
            <span className={`${HATCH} inset-y-[6px] right-0 w-[6px]`} />
            <Handle at="left-0 top-0" />
            <Handle at="left-[323px] top-0" />
            <Handle at="right-0 top-0" />
            <Handle at="left-0 top-[51px]" />
            <Handle at="right-0 top-[51px]" />
            <Handle at="bottom-0 left-0" />
            <Handle at="bottom-0 left-[323px]" />
            <Handle at="bottom-0 right-0" />
          </div>
        </header>
        <ul className="flex flex-col gap-3 pl-9 pt-[6px] text-[25px] font-light leading-[30px] text-black">
          {bodyParagraphs.map((p, i) => (
            <li key={i} className="flex gap-[18px]">
              <span className="mt-[15px] size-[10px] shrink-0 rounded-full bg-black" />
              <p>
                {p.map((l) => (
                  <BodyLine key={l} line={l} />
                ))}
              </p>
            </li>
          ))}
        </ul>
      </div>
      <footer className="mt-2 flex justify-between whitespace-nowrap pl-[44px] pr-[31px] text-[19px] font-medium leading-7 text-[#336666]">
        <Mixed text="CSDN&中关村软件园联合举办，传智播客师资团队主讲" latin="font-['Liberation_Sans',sans-serif] font-bold leading-none" />
        <span className="font-['Liberation_Sans',sans-serif] font-bold">
          <Spell>www.itheima.com</Spell>
        </span>
      </footer>
      <svg viewBox="0 0 9 17" className="absolute left-[714px] top-[111px] h-[17px] w-[9px]" fill="none" stroke="#000" aria-hidden="true">
        <path d="M1 .5h2.500l1 1 1-1H8M4.500 1v15M1 16.500h2.500l1-1 1 1H8" />
      </svg>
    </article>
  );
}

/* ---------- thumbnails ---------- */

type Thumb = { n: number; tip: string; body?: React.ReactNode; selected?: boolean };

const TL = "font-['Liberation_Mono',monospace] text-[4px] leading-none font-bold text-black";

const thumbs: Thumb[] = [
  {
    n: 30,
    tip: "JSP标签",
    body: (
      <span className="flex gap-1 pt-1 text-[4px] leading-[5px] text-[#8a8a8a]">
        <span>•</span>
        <span>
          JSP标签也称之为Jsp Action(JSP动作)元素，它用于在Jsp页面
          <br />
          中提供业务逻辑功能，避免在JSP页面中直接编写java代码，造
          <br />
          成jsp页面难以维护。
        </span>
      </span>
    ),
  },
  {
    n: 31,
    tip: "JSP常用标签",
    body: (
      <span className="flex flex-col text-[7px] leading-[12px]">
        {["<jsp:include>", "<jsp:forward>", "<jsp:param>"].map((t) => (
          <span key={t} className="flex items-center gap-[3px]">
            <span className="size-[3px] rounded-full bg-black" />
            <span className="text-[#999]">
              <span className="font-['Liberation_Sans',sans-serif] font-bold text-black">{t}</span>标签
            </span>
          </span>
        ))}
      </span>
    ),
  },
  {
    n: 32,
    tip: "<jsp:include>标签",
    body: (
      <span className="flex flex-col pl-[2px] pt-[2px] text-[5px] leading-[5px] text-[#8a8a8a]">
        {["• <jsp:include>标签用于把另外一个资源的输出内容", "  插入进当前JSP页面的输出内容之中，这种在JSP页面", "  执行时的引入方式称之为动态引入。"].map((t) => (
          <span key={t} className="whitespace-pre">
            <Mixed text={t} latin={TL} />
          </span>
        ))}
        <span className="pt-[2px]">•  语法：</span>
        <span className="whitespace-nowrap pl-1 pt-[2px] font-['Liberation_Mono',monospace] text-[3px] font-bold text-black">
          &lt;jsp:include page="relativeURL | &lt;%=expression%&gt;" flush="true"/&gt;
        </span>
        <span className="flex flex-col whitespace-nowrap pl-2 pt-1 text-[4px]">
          <span>✓ page属性用于指定被引入资源的相对路径，它也可以通过</span>
          <span>执行一个表达式来获得。</span>
          <span>✓ flush属性指定在插入其他资源的输出内容时，是否先将</span>
          <span>当前页面已输出的内容刷新到客户端。</span>
        </span>
      </span>
    ),
  },
  {
    n: 33,
    tip: "<jsp:include>与include指令的比较",
    selected: true,
    body: (
      <span className="-ml-1 flex flex-col gap-[3px] pt-[2px] text-[5px] leading-[6px] text-[#8a8a8a]">
        {bodyParagraphs.map((p, i) => (
          <span key={i} className="flex gap-1">
            <span className="mt-[2px] size-[2px] shrink-0 rounded-full bg-black" />
            <span>
              {p.map((l) => (
                <span key={l} className="block whitespace-pre">
                  <Mixed text={l.replace(/[[\]]/g, "")} latin={TL} />
                </span>
              ))}
            </span>
          </span>
        ))}
      </span>
    ),
  },
  { n: 34, tip: "JSP标签" },
];

const THUMB = "flex h-full w-[158px] flex-col overflow-hidden border border-black bg-white px-[2px] pt-[3px] text-left";

function ThumbRow({ t }: { t: Thumb }) {
  return (
    <li className="flex h-[118px] shrink-0 gap-[6px] pl-[2px]">
      <div className="flex w-4 flex-col items-start pt-1">
        <span className="font-['Noto_Sans',sans-serif] text-[12px] font-bold leading-[14px] text-black">{t.n}</span>
        <svg viewBox="0 0 12 11" className="h-[11px] w-3" fill="none" stroke="#999" strokeWidth="0.800" aria-hidden="true">
          <path d="M0 2.500h4M0 5h3M0 7.500h2.500M7.500 1l1.200 3 3 .2-2.300 2 .8 3.300-2.700-1.800L4.800 9.500l.8-3.300-2.300-2 3-.2z" />
        </svg>
      </div>
      <button type="button" className={t.selected ? `${THUMB} outline-4 outline-offset-1 outline-[#aca899]` : THUMB}>
        <span className="flex h-[105px] w-full flex-col rounded-[12px] border border-[#336666] pl-[10px] pr-2 pt-1">
          <span className="whitespace-nowrap text-[7px] font-medium leading-2 text-[#e6203a]">
            黑马程序员训练营<span className="text-[4px]">—不3K就业,不要一分钱的java培训!</span>
          </span>
          <span
            className={
              t.selected
                ? "mt-[2px] flex whitespace-nowrap border-b border-[#336666] pb-[2px] font-['DejaVu_Sans','Noto_Sans_CJK_SC',sans-serif] text-[6px] leading-[10px] text-[#336666]"
                : "mt-[2px] flex whitespace-nowrap border-b border-[#336666] pb-[2px] font-['DejaVu_Sans','Noto_Sans_CJK_SC',sans-serif] text-[7px] leading-[10px] text-[#336666]"
            }
          >
            <span className="w-[21px] font-bold">
              <i>Tip</i>：
            </span>
            <Mixed text={t.tip} latin="font-bold" />
          </span>
          {t.body}
        </span>
        {t.body && (
          <span className="flex w-full justify-between whitespace-nowrap px-[9px] text-[4px] leading-[8px] text-[#557777]">
            <span>CSDN&amp;中关村软件园联合举办，传智播客师资团队主讲</span>
            <span>www.itheima.com</span>
          </span>
        )}
      </button>
    </li>
  );
}

/* ---------- scrollbars ---------- */

const TRACK = "bg-[repeating-conic-gradient(#ffffff_0_25%,#eae8da_0_50%)] bg-size-[2px_2px]";

function ScrollBtn({ d, c, fill = "#000" }: { d: string; c: string; fill?: string }) {
  return (
    <button type="button" className={`flex shrink-0 items-center justify-center border-b border-r border-[#8a8878] bg-[#ece9d8] ${c}`}>
      <svg viewBox="0 0 8 8" className="size-2" aria-hidden="true">
        <path d={d} fill={fill} />
      </svg>
    </button>
  );
}

const UP = "M0 6h8L4 2z";
const DOWN = "M0 2h8L4 6z";

/* ---------- shell ---------- */

const menus: [string, string][] = [
  ["文件", "F"],
  ["编辑", "E"],
  ["视图", "V"],
  ["插入", "I"],
  ["格式", "O"],
  ["工具", "T"],
  ["幻灯片放映", "D"],
  ["窗口", "W"],
  ["帮助", "H"],
];

const quick: IconName[] = ["ie", "ue", "outlook", "desk", "butterfly", "keyman"];
const tray: IconName[] = ["keyred", "trayMan", "antenna", "chat", "net", "wifiOff", "speaker", "usb", "users", "umbrella", "nvidia"];

const tasks: { icon: IconName; label: string; tone?: "on" | "alert" }[] = [
  { icon: "pptDoc", label: "jsp", tone: "on" },
  { icon: "mp", label: "M..." },
  { icon: "red", label: "方...", tone: "alert" },
  { icon: "folder", label: "jsp" },
  { icon: "ue", label: "U..." },
  { icon: "word", label: "文..." },
  { icon: "word", label: "文..." },
  { icon: "folder", label: "jsp" },
  { icon: "ie", label: "h..." },
];

const WINBTN = "flex size-[21px] items-center justify-center rounded-[3px] border border-white";

export default function App() {
  return (
    <div className="flex h-screen flex-col overflow-hidden bg-[#ece9d8] font-['Noto_Sans_CJK_SC',sans-serif] text-[12px] leading-4 text-black">
      <header className="flex h-[26px] shrink-0 items-center bg-[linear-gradient(#3c96ff_0,#0a5ff0_12%,#0054e3_40%,#0066ff_85%,#003dd0_100%)] pl-[2px] pr-[2px]">
        {icons.ppt}
        <h2 className="ml-1 flex-1 whitespace-nowrap font-['Liberation_Mono',monospace] text-[13px] font-bold text-white [text-shadow:1px_1px_0_#0a2f80]">
          Microsoft PowerPoint - [jsp]
        </h2>
        <div className="flex gap-[2px]">
          <button type="button" aria-label="Minimize" className={`${WINBTN} bg-[linear-gradient(135deg,#6b9cff,#2356d8)]`}>
            <svg viewBox="0 0 16 16" className="size-4">
              <path d="M3 11h7v3H3z" fill="#fff" />
            </svg>
          </button>
          <button type="button" aria-label="Restore" className={`${WINBTN} bg-[linear-gradient(135deg,#6b9cff,#2356d8)]`}>
            <svg viewBox="0 0 16 16" className="size-4" fill="none" stroke="#fff">
              <path d="M6 6V3h7.500v7H11M6 3.500h7.500M2.500 6.500h8v7h-8zM2.500 7.500h8" strokeWidth="1.300" />
            </svg>
          </button>
          <button type="button" aria-label="Close" className={`${WINBTN} bg-[linear-gradient(135deg,#f09070,#d0401c)]`}>
            <svg viewBox="0 0 16 16" className="size-4" stroke="#fff" strokeWidth="2.200">
              <path d="M3 3l10 10M13 3L3 13" />
            </svg>
          </button>
        </div>
      </header>

      <nav className="flex h-[23px] shrink-0 items-center">
        <Grip />
        {icons.pptDoc}
        <div className="ml-[9px] flex flex-1 gap-4">
          {menus.map(([l, k]) => (
            <button key={k} type="button">
              <Accel label={l} k={k} />
            </button>
          ))}
        </div>
        <label className="flex h-[18px] w-[178px] items-center bg-white">
          <input aria-label="键入需要帮助的问题" placeholder="键入需要帮助的问题" className="min-w-0 flex-1 bg-transparent pl-[3px] pb-[2px] text-[12px] leading-4 outline-none placeholder:text-[#aca899]" />
          <span className="mr-px flex h-4 w-[11px] items-center justify-center bg-[#f1efe2]">
            <Caret />
          </span>
        </label>
        <button type="button" aria-label="Close document" className="mr-[5px] ml-1 flex size-[10px] items-center justify-center">
          <svg viewBox="0 0 8 8" className="size-2" stroke="#000" strokeWidth="1.500">
            <path d="M.5.500l7 7M7.500.500l-7 7" />
          </svg>
        </button>
      </nav>

      <div className="flex h-[26px] shrink-0 items-center pl-[399px]">
        <Grip />
        <Combo value="宋体" w="w-[141px]" label="字体" />
        <Combo value="29" w="w-[46px]" label="字号" />
        <Sep />
        <Btn on>
          <b className="font-['Liberation_Serif',serif] text-[16px]">B</b>
        </Btn>
        <Btn icon="italic" />
        <Btn>
          <b className="font-['Liberation_Serif',serif] text-[14px] text-[#444] underline underline-offset-2">U</b>
        </Btn>
        <Btn>
          <b className="font-['Liberation_Serif',serif] text-[15px] text-[#666] [text-shadow:1px_1px_0_#b5b2a2]">S</b>
        </Btn>
        <Sep />
        <Btn icon="left" on />
        <Btn icon="center" />
        <Btn icon="right" />
        <Btn icon="distribute" />
        <Btn icon="vertical" />
        <Sep />
        <Btn icon="numbered" />
        <Btn icon="bullets" />
        <Sep />
        <Btn icon="grow" />
        <Btn icon="shrink" />
        <Sep />
        <Btn icon="outdent" />
        <Btn icon="indent" />
        <Sep />
        <Btn icon="fontColor" />
        <Drop />
        <Sep />
        <button type="button" className="ml-[2px] flex items-center gap-[3px]">
          {icons.design}
          <Accel label="设计" k="S" />
        </button>
        <button type="button" className="ml-[9px] flex items-center gap-[2px]">
          {icons.newSlide}
          <Accel label="新幻灯片" k="N" />
        </button>
        <span className="w-1" />
        <More />
      </div>

      <div className="flex h-[26px] shrink-0 items-center">
        <Grip />
        <span className="-ml-[3px] flex items-center">
          <Btn icon="newDoc" />
          <Btn icon="open" />
          <Btn icon="save" />
          <Btn icon="mail" />
          <Btn icon="searchDoc" />
        </span>
        <Sep />
        <Btn icon="print" />
        <Btn icon="preview" />
        <Btn icon="spell" />
        <Sep />
        <Btn icon="cut" />
        <Btn icon="copy" />
        <Btn icon="paste" />
        <Btn icon="brush" />
        <Sep />
        <Btn icon="undo" />
        <Drop />
        <Btn icon="redo" />
        <span className="opacity-40">
          <Drop />
        </span>
        <Sep />
        <Btn icon="chart" />
        <Btn icon="table" />
        <Btn icon="borders" />
        <Btn icon="link" />
        <Sep />
        <Btn icon="expand" />
        <Btn icon="fmt" />
        <Btn icon="grid" />
        <Btn icon="colors" />
        <Combo value="78%" w="w-[89px]" label="显示比例" />
        <Sep />
        <Btn icon="help" />
        <Btn icon="research" />
        <More />
      </div>

      <div className="flex h-[26px] shrink-0 items-center">
        <Grip />
        <button type="button" className="flex items-center gap-1">
          {icons.record}
          <span className={UI_LATIN}>Record</span>
        </button>
        <span className="w-[3px]" />
        <Btn icon="pointer3d" on />
        <Btn icon="webcam" />
        <Btn icon="camWin" />
        <Btn icon="props" />
        <Btn icon="helpBlue" />
        <More />
      </div>

      <div className="flex min-h-0 flex-1">
        <aside className="flex w-[208px] shrink-0 flex-col">
          <div className="relative flex h-[19px] shrink-0 items-center border-b border-[#aca899]">
            <svg viewBox="0 0 120 19" className="absolute left-0 top-0 h-[19px] w-[120px]" fill="none" stroke="#8a8878" aria-hidden="true">
              <path d="M1 18.500L7 5.500l1.500-2H53l2 2 3 7" />
              <path d="M55 19L62 5l2-2h44l2 2 8 14" fill="#fff" />
            </svg>
            <button type="button" className="relative ml-[18px]">
              大纲
            </button>
            <button type="button" className="relative ml-6 flex-1 text-left font-bold">
              幻灯片
            </button>
            <button type="button" aria-label="Close pane" className="mr-[6px]">
              <svg viewBox="0 0 8 8" className="size-2" stroke="#000" strokeWidth="1.400">
                <path d="M.5.500l7 7M7.500.500l-7 7" />
              </svg>
            </button>
          </div>
          <div className="flex min-h-0 flex-1 bg-white">
            <ul className="flex flex-1 flex-col gap-[14px] overflow-hidden pt-[9px]">
              {thumbs.map((t) => (
                <ThumbRow key={t.n} t={t} />
              ))}
            </ul>
            <div className={`flex w-4 shrink-0 flex-col ${TRACK}`}>
              <ScrollBtn d={UP} c="h-4" />
              <span className="grow-[416]" />
              <span className="h-[42px] border-b border-r border-[#8a8878] bg-[#ece9d8]" />
              <span className="grow-[72]" />
              <ScrollBtn d={DOWN} c="h-4" />
            </div>
          </div>
          <div className="flex h-[15px] shrink-0 items-center">
            <button type="button" aria-label="Normal view" className="flex size-4 shrink-0 items-center justify-center border border-[#316ac5] bg-[#dde4ee]">
              <svg viewBox="0 0 12 10" className="h-[10px] w-3 shrink-0" fill="none" stroke="#000">
                <path d="M.5.500h11v9H.5zM4.500.5v9M6.500 2.500h3v4h-3z" />
              </svg>
            </button>
            <button type="button" aria-label="Sorter view" className="flex size-4 shrink-0 items-center justify-center">
              <svg viewBox="0 0 12 10" className="h-[10px] w-3" fill="none" stroke="#000">
                <path d="M1.500.500h3v3h-3zM7.500.500h3v3h-3zM1.500 6.500h3v3h-3zM7.500 6.500h3v3h-3z" />
              </svg>
            </button>
            <button type="button" aria-label="Show view" className="flex size-4 shrink-0 items-center justify-center">
              <svg viewBox="0 0 12 10" className="h-[10px] w-3" fill="none" stroke="#000">
                <path d="M.5.500h11M2 1l1 4.500h6L10 1M6 5.500v4M3.500 9.500h5" />
              </svg>
            </button>
            <div className={`flex h-full flex-1 justify-between ${TRACK}`}>
              <ScrollBtn d="M6 0v8L2 4z" c="w-4" fill="#aca899" />
              <ScrollBtn d="M2 0v8l4-4z" c="w-4" fill="#aca899" />
            </div>
          </div>
        </aside>

        <div className="w-[5px] shrink-0 border-l border-white" />

        <main className="flex min-w-0 flex-1 pb-[5px]">
          <section className="flex min-w-0 flex-1 justify-center overflow-hidden bg-[#aca899] pt-[13px]">
            <Slide />
          </section>
          <div className="flex w-4 shrink-0 flex-col">
            <div className={`flex flex-1 flex-col ${TRACK}`}>
              <ScrollBtn d={UP} c="h-4" />
              <span className="grow-[427]" />
              <span className="h-[11px] border-b border-r border-[#8a8878] bg-[#ece9d8]" />
              <span className="grow-[74]" />
              <ScrollBtn d={DOWN} c="h-4" />
            </div>
            <button type="button" aria-label="Previous slide" className="flex h-4 items-center justify-center">
              <svg viewBox="0 0 8 10" className="h-[10px] w-2">
                <path d="M0 4h8L4 0zM0 9h8L4 5z" />
              </svg>
            </button>
            <button type="button" aria-label="Next slide" className="flex h-4 items-center justify-center border-b border-black">
              <svg viewBox="0 0 8 10" className="h-[10px] w-2">
                <path d="M0 1h8L4 5zM0 6h8L4 10z" />
              </svg>
            </button>
            <span className="h-4" />
          </div>
        </main>
      </div>

      <div className="flex h-[28px] shrink-0 items-center border-t border-[#b5b29f]">
        <Grip />
        <button type="button" className="ml-px mr-[2px]">
          <Accel label="绘图" k="R" />
        </button>
        <Drop />
        <Btn icon="cursor" on />
        <Sep />
        <button type="button" className="ml-1">
          <Accel label="自选图形" k="U" />
        </button>
        <Drop />
        <Btn icon="line" />
        <Btn icon="arrow" />
        <Btn icon="rect" />
        <Btn icon="oval" />
        <Btn icon="textbox" />
        <Btn icon="vtextbox" />
        <Btn icon="wordart" />
        <Btn icon="diagram" />
        <Btn icon="clipart" />
        <Btn icon="picture" />
        <Sep />
        <Btn icon="fill" />
        <Drop />
        <Btn icon="lineColor" />
        <Drop />
        <Btn icon="fontColor" />
        <Drop />
        <Btn icon="lineStyle" />
        <Btn icon="dashStyle" />
        <Btn icon="arrowStyle" />
        <Btn icon="shadow" />
        <Btn icon="cube" />
        <More />
      </div>

      <div className="flex h-5 shrink-0 items-center gap-1 pl-[2px]">
        <span className="w-[247px] border border-[#e2dfcd] text-center">
          <Ui text="幻灯片 33 / 38" />
        </span>
        <span className="w-[247px] border border-[#e2dfcd] text-center">
          <Ui text="1_Studio" />
        </span>
        <span className="h-[18px] w-[177px] border border-[#e2dfcd]" />
        <span className="flex h-[18px] w-[31px] items-center justify-center border border-[#e2dfcd]">{icons.book}</span>
      </div>

      <footer className="flex h-[30px] shrink-0 items-stretch bg-[linear-gradient(#3f80f0_0,#2a66e0_12%,#245edb_50%,#245edb_85%,#1941a5_100%)] text-white">
        <button type="button" className="flex w-[97px] shrink-0 items-center gap-1 rounded-r-[10px] bg-[linear-gradient(#6cb86a_0,#3c9a3c_15%,#2f8a30_60%,#3a9a3c_85%,#1f6a22_100%)] pl-[10px] shadow-[1px_0_2px_#0a2a60]">
          <svg viewBox="0 0 20 18" className="h-[18px] w-5" aria-hidden="true">
            <path d="M2.500 2.500C5 1 7 1.200 9.300 2.500L8 8.500C6 7.500 4 7.300 1.500 8.500z" fill="#e8542c" />
            <path d="M10.300 3c2.500 1.300 5 1.300 7.700-.3l-1.300 6C14 10 11.500 10 9 8.800z" fill="#7cc242" />
            <path d="M1.200 9.500C3.500 8.300 5.500 8.400 7.700 9.500l-1.300 6C4.500 14.500 2.500 14.300 0 15.500z" fill="#4a86e8" />
            <path d="M8.800 9.900c2.500 1.200 5 1.200 7.700-.1l-1.300 6c-2.500 1.300-5 1.300-7.700.1z" fill="#f8c82c" />
          </svg>
          <span className="text-[20px] italic leading-6 [text-shadow:1px_1px_1px_#1a4a1a]">开始</span>
        </button>
        <div className="flex w-[187px] shrink-0 items-center gap-[7px] pl-3">
          {quick.map((q) => (
            <button key={q} type="button">
              {icons[q]}
            </button>
          ))}
          <span className="ml-5 self-start pt-[2px] text-[14px]">»</span>
        </div>
        <div className="flex shrink-0 items-center gap-[2px]">
          {tasks.map((t, i) => (
            <button
              key={i}
              type="button"
              className={
                t.tone === "on"
                  ? "flex h-[25px] w-[68px] items-center gap-[6px] whitespace-nowrap rounded-[2px] bg-[#1e4fb8] pl-2 shadow-[inset_1px_1px_1px_#0f2f80]"
                  : t.tone === "alert"
                    ? "flex h-[25px] w-[68px] items-center gap-[6px] whitespace-nowrap rounded-[2px] bg-[#e07a10] pl-2 shadow-[inset_1px_1px_0_#f0a040]"
                    : "flex h-[25px] w-[68px] items-center gap-[6px] whitespace-nowrap rounded-[2px] bg-[#3c81f3] pl-2 shadow-[inset_1px_1px_0_#6ba2ff]"
              }
            >
              {icons[t.icon]}
              <Ui text={t.label} />
            </button>
          ))}
        </div>
        <div className="flex min-w-0 flex-1 items-center pl-2">
          {icons.keyboard}
          <span className="ml-2 whitespace-nowrap text-[#9cbcf5]">开发文档</span>
          <span className="ml-2 self-start pt-[2px] text-[14px] text-[#c8dcff]">»</span>
        </div>
        <div className="flex w-[257px] shrink-0 items-center bg-[linear-gradient(#1ca4f4_0,#16a0f0_15%,#0f8eea_60%,#139af0_85%,#0d6fc0_100%)] pl-[10px] shadow-[-1px_0_0_#0a3f90]">
          <div className="flex items-center gap-[2px]">
            {tray.map((t) => (
              <span key={t}>{icons[t]}</span>
            ))}
          </div>
          <time className="ml-2 font-['Liberation_Mono',monospace] text-[10px]">11:47</time>
        </div>
      </footer>
    </div>
  );
}
